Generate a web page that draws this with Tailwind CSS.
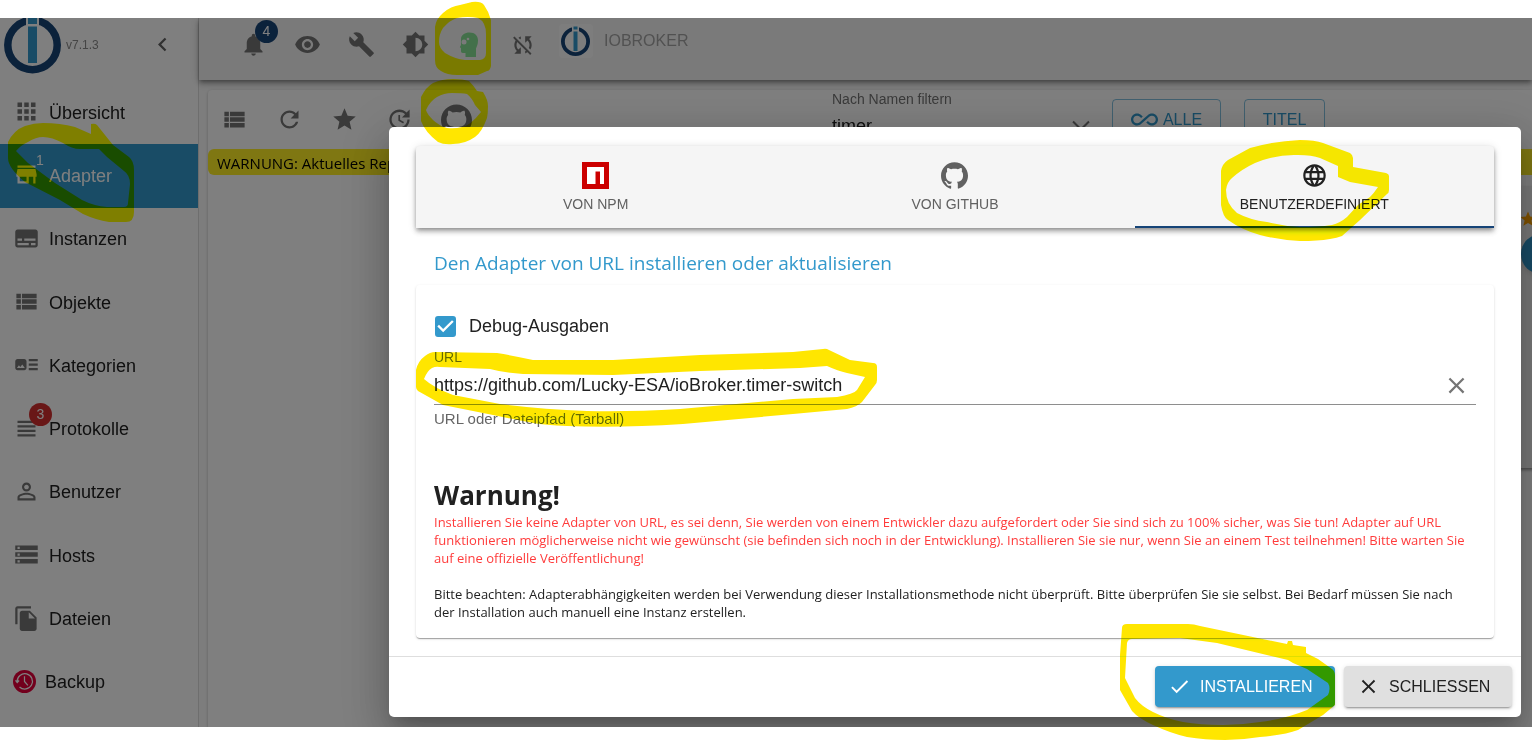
<!DOCTYPE html>
<html lang="de">
<head>
    <meta charset="UTF-8">
    <meta name="viewport" content="width=device-width, initial-scale=1.0">
    <title>ioBroker Admin</title>
    <script src="https://cdn.jsdelivr.net/npm/@tailwindcss/browser@4"></script>
</head>
<body class="bg-white font-['Liberation_Sans',Arial,sans-serif] text-[#212121]">
<div class="relative isolate flex flex-col h-screen bg-white pt-[18px] pb-[14px] overflow-hidden">

    <div class="relative flex flex-1 min-h-0 bg-[#fafafa] overflow-hidden">
        <!-- Sidebar -->
        <aside class="flex flex-col w-[199px] shrink-0 bg-white border-r border-[#dcdcdc] overflow-hidden">
            <div class="flex items-center h-[62px] shrink-0 pl-[3px] pr-[22px] pb-[9px]">
                <svg class="size-[58px] shrink-0" viewBox="0 0 58 58">
                    <circle cx="29.500" cy="29" r="24.700" fill="none" stroke="#164477" stroke-width="7.500"/>
                    <path d="M23 0h13v12H23z" fill="#fff"/>
                    <path d="M25 0h9v8h-9zM25 10.500h9V47h-9z" fill="#3399cc"/>
                </svg>
                <span class="ml-[5px] text-[12px] text-[#8a8a8a]">v7.1.3</span>
                <button aria-label="Menü schließen" class="ml-auto text-[#616161]">
                    <svg class="size-[27px]" viewBox="0 0 24 24" fill="currentColor"><path d="M15.410 7.410L14 6l-6 6 6 6 1.410-1.410L10.830 12z"/></svg>
                </button>
            </div>
            <nav class="flex flex-col flex-1 pt-px pb-[13px] text-[18px]">
                <a href="#" class="flex flex-1 items-center gap-[9px] pl-[13px] pt-px">
                    <svg class="size-[27px] mb-[3px] text-[#757575]" viewBox="0 0 24 24" fill="currentColor"><path d="M4 8h4V4H4v4zm6 12h4v-4h-4v4zm-6 0h4v-4H4v4zm0-6h4v-4H4v4zm6 0h4v-4h-4v4zm6-10v4h4V4h-4zm-6 4h4V4h-4v4zm6 6h4v-4h-4v4zm0 6h4v-4h-4v4z"/></svg>
                    Übersicht
                </a>
                <a href="#" class="flex flex-1 items-center gap-[9px] pl-[13px] pt-px bg-[#3399cc] text-white">
                    <span class="relative mb-[3px]">
                        <svg class="size-[27px]" viewBox="0 0 24 24" fill="currentColor"><path d="M20 4H4v2h16V4zm1 10v-2l-1-5H4l-1 5v2h1v6h10v-6h4v6h2v-6h1zm-9 4H6v-4h6v4z"/></svg>
                        <span class="absolute -top-[9px] left-[23px] text-[14px] leading-[16px]">1</span>
                    </span>
                    Adapter
                </a>
                <a href="#" class="flex flex-1 items-center gap-[9px] pl-[13px] pt-px">
                    <svg class="size-[27px] mb-[3px] text-[#757575]" viewBox="0 0 24 24" fill="currentColor"><path d="M20 4H4c-1.100 0-2 .9-2 2v12c0 1.100.9 2 2 2h16c1.100 0 2-.9 2-2V6c0-1.100-.9-2-2-2zM4 12h4v2H4v-2zm10 6H4v-2h10v2zm6 0h-4v-2h4v2zm0-4H10v-2h10v2z"/></svg>
                    Instanzen
                </a>
                <a href="#" class="flex flex-1 items-center gap-[9px] pl-[13px] pt-px">
                    <svg class="size-[27px] mb-[3px] text-[#757575]" viewBox="0 0 24 24" fill="currentColor"><path d="M3 14h4v-4H3v4zm0 5h4v-4H3v4zM3 9h4V5H3v4zm5 5h13v-4H8v4zm0 5h13v-4H8v4zM8 5v4h13V5H8z"/></svg>
                    Objekte
                </a>
                <a href="#" class="flex flex-1 items-center gap-[9px] pl-[13px] pt-px">
                    <svg class="size-[27px] mb-[3px] text-[#757575]" viewBox="0 0 24 24" fill="currentColor"><path d="M22 13h-8v-2h8v2zm0-6h-8v2h8V7zm-8 10h8v-2h-8v2zm-2-8v6c0 1.100-.9 2-2 2H4c-1.100 0-2-.9-2-2V9c0-1.100.9-2 2-2h6c1.100 0 2 .9 2 2zm-1.500 6l-2.250-3-1.750 2.260-1.250-1.510L3.500 15h7z"/></svg>
                    Kategorien
                </a>
                <a href="#" class="flex flex-1 items-center gap-[9px] pl-[13px] pt-px">
                    <span class="relative mb-[3px]">
                        <svg class="size-[27px] text-[#757575]" viewBox="0 0 24 24" fill="currentColor"><path d="M4 15h16v-2H4v2zm0 4h16v-2H4v2zm0-8h16V9H4v2zm0-6v2h16V5H4z"/></svg>
                        <span class="absolute -top-[12px] left-4 flex items-center justify-center size-[23px] rounded-full bg-[#d32f2f] text-white text-[14px]">3</span>
                    </span>
                    Protokolle
                </a>
                <a href="#" class="flex flex-1 items-center gap-[9px] pl-[13px] pt-px">
                    <svg class="size-[27px] mb-[3px] text-[#757575]" viewBox="0 0 24 24" fill="currentColor"><path d="M12 5.900c1.160 0 2.100.94 2.100 2.100s-.94 2.100-2.100 2.100S9.900 9.160 9.900 8s.94-2.100 2.100-2.100m0 9c2.970 0 6.100 1.460 6.100 2.100v1.100H5.900V17c0-.64 3.130-2.100 6.100-2.100M12 4C9.790 4 8 5.790 8 8s1.790 4 4 4 4-1.790 4-4-1.790-4-4-4zm0 9c-2.670 0-8 1.340-8 4v3h16v-3c0-2.660-5.330-4-8-4z"/></svg>
                    Benutzer
                </a>
                <a href="#" class="flex flex-1 items-center gap-[9px] pl-[13px] pt-px">
                    <svg class="size-[27px] mb-[3px] text-[#757575]" viewBox="0 0 24 24" fill="currentColor"><path d="M2 20h20v-4H2v4zm2-3h2v2H4v-2zM2 4v4h20V4H2zm4 3H4V5h2v2zm-4 7h20v-4H2v4zm2-3h2v2H4v-2z"/></svg>
                    Hosts
                </a>
                <a href="#" class="flex flex-1 items-center gap-[9px] pl-[13px] pt-px">
                    <svg class="size-[27px] mb-[3px] text-[#757575]" viewBox="0 0 24 24" fill="currentColor"><path d="M16 1H4c-1.100 0-2 .9-2 2v14h2V3h12V1zm-1 4l6 6v10c0 1.100-.9 2-2 2H7.990C6.890 23 6 22.100 6 21V7c0-1.100.89-2 1.990-2h7zm-1 7h5.500L14 6.500V12z"/></svg>
                    Dateien
                </a>
                <a href="#" class="flex flex-1 items-center gap-[9px] pl-[13px] pt-px">
                    <svg class="size-[23px] mb-[3px]" viewBox="0 0 24 24" fill="none" stroke="#fff" stroke-width="1.300">
                        <circle cx="12" cy="12" r="12" fill="#e4003a" stroke="none"/>
                        <path d="M4.300 12a8 8 0 1 1 2.500 5.700M2.600 10.800l1.800 2.200 2-2M12 6.500V12l3.500 4"/>
                    </svg>
                    Backup
                </a>
            </nav>
        </aside>

        <div class="flex flex-col flex-1 min-w-0">
            <!-- App bar -->
            <header class="relative z-10 flex items-center h-[62px] shrink-0 pl-[41px] pb-[9px] gap-[27px] bg-[#f5f5f5] text-[#757575] shadow-[0_2px_4px_-1px_rgba(0,0,0,0.3),0_4px_5px_rgba(0,0,0,0.2),0_1px_10px_rgba(0,0,0,0.16)]">
                <button aria-label="Benachrichtigungen" class="relative">
                    <svg class="size-[27px]" viewBox="0 0 24 24" fill="currentColor"><path d="M12 22c1.100 0 2-.9 2-2h-4c0 1.100.89 2 2 2zm6-6v-5c0-3.070-1.640-5.640-4.500-6.320V4c0-.83-.67-1.500-1.500-1.500s-1.500.67-1.500 1.500v.68C7.630 5.360 6 7.920 6 11v5l-2 2v1h16v-1l-2-2z"/></svg>
                    <span class="absolute -top-[11px] left-[15px] flex items-center justify-center size-[23px] rounded-full bg-[#164477] text-white text-[14px]">4</span>
                </button>
                <button aria-label="Sichtbarkeit"><svg class="size-[27px]" viewBox="0 0 24 24" fill="currentColor"><path d="M12 4.500C7 4.500 2.730 7.610 1 12c1.730 4.390 6 7.500 11 7.500s9.270-3.110 11-7.500c-1.730-4.390-6-7.500-11-7.500zM12 17c-2.760 0-5-2.240-5-5s2.240-5 5-5 5 2.240 5 5-2.240 5-5 5zm0-8c-1.660 0-3 1.340-3 3s1.340 3 3 3 3-1.340 3-3-1.340-3-3-3z"/></svg></button>
                <button aria-label="Einstellungen"><svg class="size-[27px]" viewBox="0 0 24 24" fill="currentColor"><path d="M22.700 19l-9.100-9.100c.9-2.300.4-5-1.500-6.900-2-2-5-2.400-7.400-1.300L9 6 6 9 1.600 4.700C.4 7.100.9 10.100 2.900 12.100c1.900 1.900 4.600 2.400 6.900 1.500l9.100 9.100c.4.4 1 .4 1.400 0l2.300-2.300c.5-.4.5-1.100.1-1.400z"/></svg></button>
                <button aria-label="Farbschema"><svg class="size-[27px]" viewBox="0 0 24 24" fill="currentColor"><path d="M20 15.310L23.310 12 20 8.690V4h-4.690L12 .69 8.690 4H4v4.690L.69 12 4 15.310V20h4.690L12 23.310 15.310 20H20v-4.690zM12 18V6c3.310 0 6 2.690 6 6s-2.690 6-6 6z"/></svg></button>
                <button aria-label="Expertenmodus">
                    <svg class="size-[27px]" viewBox="0 0 27 27">
                        <path d="M5 8C5 4 9 1.500 13.500 1.500 19 1.500 22 5 22 9.500c0 4-1.300 6-2 8V26H9.500v-4H6.800C5.500 22 5 21.300 5 20v-3l-1.200-.8L5 14z" fill="#87e094"/>
                        <circle cx="8" cy="11" r="2.500" fill="#f5f5f5"/><circle cx="12" cy="8" r="1.300" fill="#f5f5f5"/>
                    </svg>
                </button>
                <button aria-label="Keine Synchronisierung"><svg class="size-[26px]" viewBox="0 0 24 24" fill="currentColor"><path d="M10 6.350V4.260c-.8.21-1.550.54-2.230.96l1.460 1.460c.25-.12.5-.24.77-.33zm-7.140-.94l2.360 2.360C4.450 8.990 4 10.440 4 12c0 2.210.91 4.200 2.360 5.640L4 20h6v-6l-2.240 2.240C6.680 15.150 6 13.660 6 12c0-1 .25-1.940.68-2.770l8.080 8.080c-.25.13-.5.25-.77.34v2.090c.8-.21 1.550-.54 2.230-.96l2.360 2.360 1.270-1.270L4.140 4.140 2.860 5.410zM20 4h-6v6l2.240-2.240C17.320 8.850 18 10.340 18 12c0 1-.25 1.940-.68 2.770l1.460 1.460C19.550 15.010 20 13.560 20 12c0-2.210-.91-4.200-2.360-5.640L20 4z"/></svg></button>
                <a href="#" class="flex items-center gap-[11px] -ml-1 mb-2 text-[16px] text-[#a3a3a3]">
                    <svg class="size-[34px]" viewBox="0 0 34 34">
                        <rect width="34" height="34" rx="4" fill="#fbfbfb"/>
                        <circle cx="16.500" cy="17.500" r="12.600" fill="none" stroke="#164477" stroke-width="3.800"/>
                        <path d="M13 1h7v7h-7z" fill="#fbfbfb"/>
                        <path d="M14.500 2.500h4v3h-4zM14.500 7.500h4V27h-4z" fill="#3399cc"/>
                    </svg>
                    IOBROKER
                </a>
            </header>

            <main class="flex-1 min-h-0 pl-[9px] pt-[10px]">
                <div class="h-full bg-white rounded-tl shadow-[0_1px_3px_rgba(0,0,0,0.25)] overflow-hidden">
                    <div class="flex items-center h-[59px] text-[#757575]">
                        <div class="flex items-center gap-7 pl-[13px]">
                            <button aria-label="Listenansicht"><svg class="size-[27px]" viewBox="0 0 24 24" fill="currentColor"><path d="M3 14h4v-4H3v4zm0 5h4v-4H3v4zM3 9h4V5H3v4zm5 5h13v-4H8v4zm0 5h13v-4H8v4zM8 5v4h13V5H8z"/></svg></button>
                            <button aria-label="Aktualisieren"><svg class="size-[27px]" viewBox="0 0 24 24" fill="currentColor"><path d="M17.650 6.350C16.200 4.900 14.210 4 12 4c-4.420 0-7.990 3.580-7.990 8s3.570 8 7.990 8c3.730 0 6.840-2.550 7.730-6h-2.080c-.82 2.330-3.040 4-5.650 4-3.310 0-6-2.690-6-6s2.690-6 6-6c1.660 0 3.140.69 4.220 1.780L13 11h7V4l-2.350 2.350z"/></svg></button>
                            <button aria-label="Favoriten"><svg class="size-[27px]" viewBox="0 0 24 24" fill="currentColor"><path d="M12 17.270L18.180 21l-1.640-7.030L22 9.240l-7.190-.61L12 2 9.190 8.630 2 9.240l5.460 4.730L5.820 21z"/></svg></button>
                            <button aria-label="Updates"><svg class="size-[27px]" viewBox="0 0 24 24" fill="currentColor"><path d="M21 10.120h-6.780l2.740-2.820c-2.730-2.700-7.150-2.800-9.880-.1-2.730 2.710-2.730 7.080 0 9.790s7.150 2.710 9.880 0C18.320 15.650 19 14.080 19 12.100h2c0 1.980-.88 4.550-2.640 6.290-3.510 3.480-9.210 3.480-12.720 0-3.500-3.470-3.530-9.110-.02-12.580s9.140-3.470 12.650 0L21 3v7.120zM12.500 8v4.250l3.500 2.080-.72 1.210L11 13V8h1.500z"/></svg></button>
                            <button aria-label="Von GitHub installieren"><svg class="size-[31px]" viewBox="0 0 24 24" fill="currentColor"><path d="M12 .297c-6.630 0-12 5.373-12 12 0 5.303 3.438 9.800 8.205 11.385.6.113.82-.258.82-.577 0-.285-.01-1.040-.015-2.040-3.338.724-4.042-1.610-4.042-1.610C4.422 18.070 3.633 17.700 3.633 17.700c-1.087-.744.084-.729.084-.729 1.205.084 1.838 1.236 1.838 1.236 1.070 1.835 2.809 1.305 3.495.998.108-.776.417-1.305.76-1.605-2.665-.3-5.466-1.332-5.466-5.930 0-1.310.465-2.380 1.235-3.220-.135-.303-.54-1.523.105-3.176 0 0 1.005-.322 3.300 1.230.96-.267 1.980-.399 3-.405 1.020.006 2.040.138 3 .405 2.280-1.552 3.285-1.230 3.285-1.230.645 1.653.24 2.873.12 3.176.765.84 1.230 1.910 1.230 3.220 0 4.610-2.805 5.625-5.475 5.920.42.36.81 1.096.81 2.220 0 1.606-.015 2.896-.015 3.286 0 .315.21.69.825.57C20.565 22.092 24 17.592 24 12.297c0-6.627-5.373-12-12-12"/></svg></button>
                        </div>
                        <div class="relative self-start ml-auto w-[262px] mr-[18px]">
                            <label for="filter" class="block text-[14px] leading-[18px]">Nach Namen filtern</label>
                            <select id="filter" class="appearance-none block w-full h-[38px] border-b border-[#8a8a8a] text-[18px] text-[#212121]"><option>timer</option></select>
                            <svg class="absolute right-0 bottom-[7px] size-[26px] pointer-events-none" viewBox="0 0 24 24" fill="currentColor"><path d="M18.700 7.200L12 13.900 5.300 7.200 4 8.500l8 8 8-8z"/></svg>
                        </div>
                        <button class="flex items-center justify-center gap-[5px] w-[109px] h-[41px] border border-[#3399cc]/60 rounded text-[16px] text-[#3399cc]">
                            <svg class="size-[27px]" viewBox="0 0 24 24" fill="currentColor"><path d="M18.600 6.620c-1.440 0-2.800.56-3.770 1.530L12 10.660 10.480 12h.01L7.800 14.390c-.64.64-1.490.99-2.400.99-1.870 0-3.390-1.510-3.390-3.380S3.530 8.620 5.400 8.620c.91 0 1.760.35 2.440 1.030l1.130 1 1.510-1.340L9.220 8.200C8.200 7.180 6.840 6.620 5.400 6.620 2.420 6.620 0 9.040 0 12s2.420 5.380 5.400 5.380c1.440 0 2.800-.56 3.770-1.530l2.830-2.500.01.01L13.520 12h-.01l2.690-2.390c.64-.64 1.490-.99 2.400-.99 1.870 0 3.390 1.510 3.390 3.380s-1.520 3.380-3.390 3.380c-.9 0-1.760-.35-2.440-1.030l-1.140-1.010-1.510 1.340 1.270 1.120c1.020 1.010 2.370 1.570 3.820 1.570 2.980 0 5.400-2.410 5.400-5.380s-2.420-5.370-5.400-5.370z"/></svg>
                            ALLE
                        </button>
                        <button class="w-[81px] h-[41px] ml-[23px] mr-[207px] border border-[#3399cc]/60 rounded text-[16px] text-[#3399cc]">TITEL</button>
                    </div>
                    <div class="h-[26px] pl-[9px] rounded-l-[6px] bg-[#ffee24] font-['Open_Sans',sans-serif] text-[15px] leading-[28px] text-black whitespace-nowrap">WARNUNG: Aktuelles Repository</div>
                    <!-- Adapter card -->
                    <div class="relative ml-auto mt-[11px] w-[280px] h-[282px] -mr-[28px] bg-[#f2f2f2] shadow-[0_2px_3px_rgba(0,0,0,0.4)]">
                        <svg class="absolute right-[23px] top-[24px] size-[18px] text-[#ffa500]" viewBox="0 0 24 24" fill="currentColor"><path d="M12 17.270L18.180 21l-1.640-7.030L22 9.240l-7.190-.61L12 2 9.190 8.630 2 9.240l5.460 4.730L5.820 21z"/></svg>
                        <span class="absolute -right-px top-[48px] size-[40px] rounded-full bg-[#3399cc] shadow-md"></span>
                    </div>
                </div>
            </main>
        </div>

        <!-- Dialog -->
        <div class="absolute inset-0 z-20 bg-black/50 overflow-hidden">
            <div role="dialog" aria-labelledby="dialog-title" class="absolute top-[109px] left-[389px] right-[11px] bg-white rounded-[5px] shadow-[0_11px_15px_-7px_rgba(0,0,0,0.2),0_24px_38px_3px_rgba(0,0,0,0.14),0_9px_46px_8px_rgba(0,0,0,0.12)]">
                <div class="px-[27px] pt-[19px] pb-[18px]">
                    <div role="tablist" class="grid grid-cols-3 h-[82px] bg-[#f5f5f5] rounded-t text-[14px] text-[#616161] shadow-[0_2px_4px_-1px_rgba(0,0,0,0.3),0_4px_5px_rgba(0,0,0,0.2),0_1px_10px_rgba(0,0,0,0.12)]">
                        <button role="tab" class="flex flex-col items-center justify-center gap-[5px] pt-[3px]">
                            <svg class="size-[27px]" viewBox="0 0 27 27"><path d="M0 0h27v27H0z" fill="#cc0000"/><path d="M5 5h17v17h-4V9.500h-4.500V22H5z" fill="#fff"/></svg>
                            VON NPM
                        </button>
                        <button role="tab" class="flex flex-col items-center justify-center gap-[5px] pt-[3px]">
                            <svg class="size-[27px]" viewBox="0 0 24 24" fill="currentColor"><path d="M12 .297c-6.630 0-12 5.373-12 12 0 5.303 3.438 9.800 8.205 11.385.6.113.82-.258.82-.577 0-.285-.01-1.040-.015-2.040-3.338.724-4.042-1.610-4.042-1.610C4.422 18.070 3.633 17.700 3.633 17.700c-1.087-.744.084-.729.084-.729 1.205.084 1.838 1.236 1.838 1.236 1.070 1.835 2.809 1.305 3.495.998.108-.776.417-1.305.76-1.605-2.665-.3-5.466-1.332-5.466-5.930 0-1.310.465-2.380 1.235-3.220-.135-.303-.54-1.523.105-3.176 0 0 1.005-.322 3.300 1.230.96-.267 1.980-.399 3-.405 1.020.006 2.040.138 3 .405 2.280-1.552 3.285-1.230 3.285-1.230.645 1.653.24 2.873.12 3.176.765.84 1.230 1.910 1.230 3.220 0 4.610-2.805 5.625-5.475 5.920.42.36.81 1.096.81 2.220 0 1.606-.015 2.896-.015 3.286 0 .315.21.69.825.57C20.565 22.092 24 17.592 24 12.297c0-6.627-5.373-12-12-12"/></svg>
                            VON GITHUB
                        </button>
                        <button role="tab" aria-selected="true" class="flex flex-col items-center justify-center gap-[5px] pt-[5px] border-b-2 border-[#164477] text-[#212121]">
                            <svg class="size-[27px]" viewBox="0 0 24 24" fill="currentColor"><path d="M11.990 2C6.470 2 2 6.480 2 12s4.470 10 9.990 10C17.520 22 22 17.520 22 12S17.520 2 11.990 2zm6.930 6h-2.950c-.32-1.250-.78-2.450-1.380-3.560 1.840.63 3.370 1.910 4.330 3.560zM12 4.040c.83 1.200 1.480 2.530 1.910 3.960h-3.820c.43-1.430 1.080-2.760 1.910-3.960zM4.260 14C4.100 13.360 4 12.690 4 12s.1-1.360.26-2h3.380c-.08.66-.14 1.320-.14 2 0 .68.06 1.340.14 2H4.260zm.82 2h2.950c.32 1.250.78 2.450 1.380 3.560-1.840-.63-3.370-1.900-4.330-3.560zm2.950-8H5.080c.96-1.660 2.490-2.930 4.330-3.560C8.810 5.550 8.350 6.750 8.030 8zM12 19.960c-.83-1.200-1.480-2.530-1.910-3.960h3.820c-.43 1.430-1.080 2.760-1.910 3.960zM14.340 14H9.660c-.09-.66-.16-1.320-.16-2 0-.68.07-1.350.16-2h4.680c.09.65.16 1.320.16 2 0 .68-.07 1.340-.16 2zm.25 5.560c.6-1.110 1.060-2.310 1.380-3.560h2.950c-.96 1.650-2.490 2.930-4.330 3.560zM16.360 14c.08-.66.14-1.320.14-2 0-.68-.06-1.340-.14-2h3.380c.16.64.26 1.310.26 2s-.1 1.360-.26 2h-3.380z"/></svg>
                            BENUTZERDEFINIERT
                        </button>
                    </div>

                    <h2 id="dialog-title" class="mt-5 mb-[7px] pl-[18px] font-['Open_Sans',sans-serif] text-[19px] leading-[30px] text-[#3399cc]">Den Adapter von URL installieren oder aktualisieren</h2>

                    <div class="px-[18px] pt-[27px] pb-[17px] rounded shadow-[0_2px_1px_-1px_rgba(0,0,0,0.2),0_1px_1px_rgba(0,0,0,0.14),0_1px_3px_rgba(0,0,0,0.12)]">
                        <div class="flex items-center h-[28px] text-[18px]">
                            <span class="relative ml-px mr-[13px] size-[21px]">
                                <input type="checkbox" id="debug" checked class="appearance-none block size-[21px] rounded-[3px] border-2 border-[#757575] checked:border-[#3399cc] checked:bg-[#3399cc]">
                                <svg class="absolute inset-0 size-[21px] pointer-events-none" viewBox="3 3 18 18" fill="#fff"><path d="M10 17l-5-5 1.410-1.410L10 14.170l7.590-7.590L19 8z"/></svg>
                            </span>
                            <label for="debug">Debug-Ausgaben</label>
                        </div>
                        <label for="url" class="block mt-2 text-[14px] leading-[18px] text-[#666]">URL</label>
                        <div class="flex items-center h-[39px] pt-px border-b border-[#8e8e8e]">
                            <input id="url" type="text" value="https://github.com/Lucky-ESA/ioBroker.timer-switch" class="flex-1 h-full text-[18px] outline-none">
                            <button aria-label="Leeren" class="mr-1.5 text-[#757575]">
                                <svg class="size-[27px]" viewBox="0 0 24 24" fill="currentColor"><path d="M19 6.410L17.590 5 12 10.590 6.410 5 5 6.410 10.590 12 5 17.590 6.410 19 12 13.410 17.590 19 19 17.590 13.410 12z"/></svg>
                            </button>
                        </div>
                        <p class="mt-1 text-[15px] leading-[20px] text-[#666]">URL oder Dateipfad (Tarball)</p>

                        <div class="mt-[49px] font-['Open_Sans',sans-serif] text-[13px] leading-[18px]">
                            <h3 class="text-[26px] leading-[35px] font-bold">Warnung!</h3>
                            <p class="text-[#ff3b3b]">Installieren Sie keine Adapter von URL, es sei denn, Sie werden von einem Entwickler dazu aufgefordert oder Sie sind sich zu 100% sicher, was Sie tun! Adapter auf URL<br>funktionieren möglicherweise nicht wie gewünscht (sie befinden sich noch in der Entwicklung). Installieren Sie sie nur, wenn Sie an einem Test teilnehmen! Bitte warten Sie<br>auf eine offizielle Veröffentlichung!</p>
                            <p class="mt-[18px]">Bitte beachten: Adapterabhängigkeiten werden bei Verwendung dieser Installationsmethode nicht überprüft. Bitte überprüfen Sie sie selbst. Bei Bedarf müssen Sie nach<br>der Installation auch manuell eine Instanz erstellen.</p>
                        </div>
                    </div>
                </div>
                <div class="flex justify-end gap-[9px] pt-[9px] pb-[10px] pr-[9px] border-t border-[#dedede] text-[16px]">
                    <button class="flex items-center gap-[9px] w-[180px] h-[41px] pl-[13px] rounded bg-[#3399cc] text-white shadow-[0_3px_1px_-2px_rgba(0,0,0,0.2),0_2px_2px_rgba(0,0,0,0.14),0_1px_5px_rgba(0,0,0,0.12)]">
                        <svg class="size-[23px]" viewBox="0 0 24 24" fill="currentColor"><path d="M9 16.170L4.830 12l-1.420 1.410L9 19 21 7l-1.410-1.410z"/></svg>
                        INSTALLIEREN
                    </button>
                    <button class="flex items-center gap-[9px] w-[168px] h-[41px] pl-[13px] rounded bg-[#e0e0e0] shadow-[0_3px_1px_-2px_rgba(0,0,0,0.2),0_2px_2px_rgba(0,0,0,0.14),0_1px_5px_rgba(0,0,0,0.12)]">
                        <svg class="size-[23px]" viewBox="0 0 24 24" fill="currentColor"><path d="M19 6.410L17.590 5 12 10.590 6.410 5 5 6.410 10.590 12 5 17.590 6.410 19 12 13.410 17.590 19 19 17.590 13.410 12z"/></svg>
                        SCHLIESSEN
                    </button>
                </div>
            </div>
        </div>
    </div>

    <!-- Marker strokes -->
    <svg class="absolute top-0 left-0 z-30 w-[1532px] h-[741px] mix-blend-darken pointer-events-none" viewBox="0 0 1532 741" fill="#ffe600" fill-rule="evenodd">
        <path d="M8 142Q14 130 25 126 34 123 43 123 60 123 75 127L91 134V124Q95 123 97 125L113 145 129 157Q134 161 134 170V212Q134 222 126 222H109Q96 220 83 214L60 200 25 182Q8 168 8 158zM16 151Q21 145 28 142 36 137 43 137 52 137 63 143 72 149 80 149H99L107 157 124 171Q130 175 130 184L128 203Q128 207 124 207H107Q94 206 82 200L55 183 28 163z"/>
        <path d="M435 27Q436 19 443 13 451 6 460 5L472 2Q481 1 484 5 489 12 491 20V66Q490 71 487 71L478 75H457Q447 75 441 71 435 68 435 60zM439 42Q439 34 443 28 450 20 457 18 468 16 478 18 486 22 486 34V53Q486 59 480 60H465Q455 59 445 53 439 48 439 42z"/>
        <path d="M421 97Q426 87 433 83 442 79 453 79 463 79 469 81 474 86 477 91L483 92Q488 100 488 106 488 113 487 118 482 132 475 137 465 144 453 144 444 145 438 142 425 132 421 121zM426 110Q430 101 437 97 444 93 452 93 462 93 467 94 472 98 475 105L481 112Q470 126 462 127 455 129 447 128 438 125 433 120 427 114 426 110z"/>
        <path d="M1221 171Q1222 164 1228 160L1250 148Q1275 141 1300 140 1315 140 1323 143L1350 153Q1353 155 1353 158V167L1386 173Q1389 174 1389 176V190Q1389 193 1387 194L1360 220 1342 236Q1337 238 1330 239 1318 241 1300 241 1280 240 1260 235 1242 230 1228 220 1223 217 1221 205zM1226 190Q1227 182 1232 178 1242 169 1255 163 1278 154 1298 155 1312 155 1320 158L1338 166V177L1350 182 1378 187Q1374 193 1370 197L1358 205 1347 217Q1340 223 1332 225 1318 227 1300 227 1283 226 1267 222 1250 220 1237 213 1226 204 1226 190z"/>
        <path d="M416 370Q418 361 425 356 430 352 435 352L497 353Q515 356 533 360H613L700 355 793 352 823 349Q826 348 829 350L850 360 873 363Q877 363 877 367V380Q877 383 875 385L862 402Q857 407 847 409L793 414 683 424Q620 428 567 426 545 425 533 423L493 415 443 405 418 391Q416 389 416 387zM424 379Q427 371 432 368 436 366 440 367L490 369Q505 373 523 374L613 375 700 371 800 368 827 366Q838 371 847 373L865 377 857 390Q854 394 837 397L793 399 680 409Q630 412 587 411 540 409 500 404L453 395Q434 388 424 379z"/>
        <path d="M1120 655L1122 628Q1122 624 1127 624H1188Q1194 624 1200 626L1287 644 1288 641H1292L1293 645 1306 647V653L1318 659 1332 669Q1335 671 1335 676V705L1323 715 1298 730Q1285 735 1260 737 1242 740 1225 740 1205 740 1187 737 1170 733 1153 725 1138 718 1132 711L1120 690zM1125 678L1127 643Q1128 639 1132 639L1180 638 1217 643 1288 660 1293 663 1307 669 1328 683Q1331 688 1328 695L1307 710Q1285 719 1260 722 1241 725 1223 725 1200 725 1183 722 1167 719 1153 712 1141 706 1135 698z"/>
    </svg>
</div>
</body>
</html>
